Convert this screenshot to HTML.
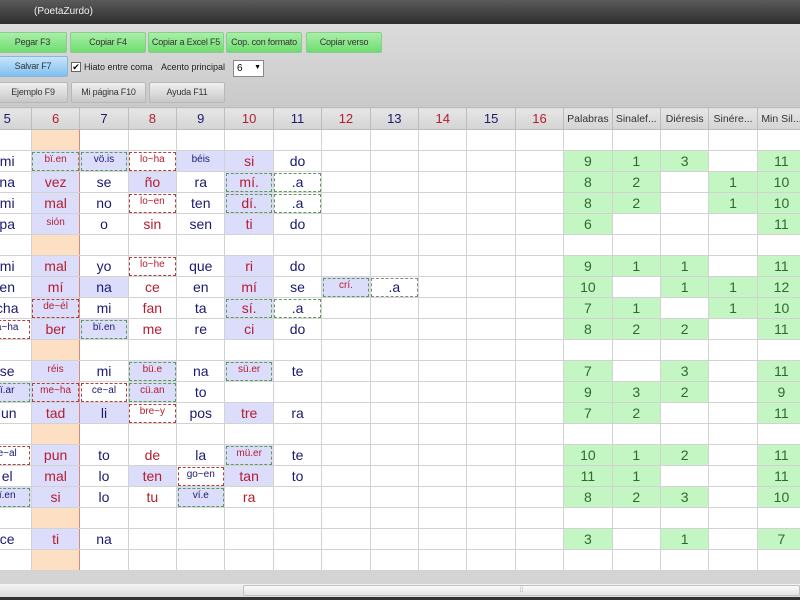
<!DOCTYPE html>
<html><head><meta charset="utf-8"><style>
*{box-sizing:border-box}
body{margin:0;width:800px;height:600px;overflow:hidden;background:#d6d6d6;font-family:"Liberation Sans",sans-serif;position:relative}
.title{position:absolute;left:0;top:0;width:800px;height:24px;background:linear-gradient(#5a5a5a,#2e2e2e);color:#eee;font-size:10px;padding:6px 0 0 34px}
.tb{position:absolute;left:0;top:24px;width:800px;height:83px;background:linear-gradient(#dcdcdc,#c9c9c9)}
.b{position:absolute;height:21px;font-size:9px;text-align:center;line-height:19px;color:#333;border-radius:2px;white-space:nowrap;overflow:hidden;letter-spacing:-0.2px}
.gr{background:linear-gradient(#a8f0a8,#6fdc6f);border:1px solid #8ccc8c}
.bl{background:linear-gradient(#c8e6fb,#7fbef0);border:1px solid #8ab4d8}
.gy{background:linear-gradient(#f0f0f0,#c8c8c8);border:1px solid #b8b8b8}
.lbl{position:absolute;font-size:9px;color:#222;white-space:nowrap}
table{position:absolute;left:-17.5px;top:107px;width:823px;border-collapse:collapse;table-layout:fixed;background:#fff}
td{width:48.4px;height:21px;padding:0;border:1px solid #d2d2d2;text-align:center;font-size:14px;color:#1a1a70;position:relative;white-space:nowrap;overflow:hidden}
tr.h td{height:22px;background:linear-gradient(#e6e6e6,#d4d4d4);border-color:#bcbcbc;font-size:13px}
tr.h td.s{font-size:10.5px;color:#333}
td.r{color:#b41e30}
td.o{background:#fde0c4}
td.c6{border-left:1px solid #d78a7a;border-right:1px solid #d78a7a}
.L{background:#dcdcfb}
.sm{font-size:10px;vertical-align:top;padding-top:3px}
.dg{outline:1px dashed #5a9a5a;outline-offset:-2px}
.dr{outline:1px dashed #b04040;outline-offset:-2px}
.dk{outline:1px dashed #888;outline-offset:-2px}
td.G{background:#c4f6c4;color:#2c6a2c}
.bot{position:absolute;left:0;top:571px;width:800px;height:14px;background:#d4d4d4}
.sb{position:absolute;left:0;top:584px;width:800px;height:13px;background:linear-gradient(#f4f4f4,#dcdcdc)}
.th{position:absolute;left:243px;top:585px;width:557px;height:11px;background:linear-gradient(#fafafa,#e4e4e4);border:1px solid #c0c0c0;border-radius:2px;font-size:7px;color:#999;text-align:center;line-height:9px}
.last{position:absolute;left:0;top:597px;width:800px;height:3px;background:#333}
</style></head><body>
<div class="title">(PoetaZurdo)</div>
<div class="tb"></div>
<div class="b gr" style="left:-2px;top:32px;width:69px">Pegar F3</div>
<div class="b gr" style="left:70px;top:32px;width:76px">Copiar F4</div>
<div class="b gr" style="left:148px;top:32px;width:76px">Copiar a Excel F5</div>
<div class="b gr" style="left:226px;top:32px;width:76px">Cop. con formato</div>
<div class="b gr" style="left:306px;top:32px;width:76px">Copiar verso</div>
<div class="b bl" style="left:-2px;top:56px;width:70px">Salvar F7</div>
<div style="position:absolute;left:71px;top:62px;width:10px;height:10px;border:1px solid #666;background:#fff;font-size:9px;line-height:8px;text-align:center">✔</div>
<div class="lbl" style="left:84px;top:62px">Hiato entre coma</div>
<div class="lbl" style="left:161px;top:62px">Acento principal</div>
<div style="position:absolute;left:233px;top:60px;width:31px;height:17px;background:#fff;border:1px solid #888;font-size:10px;padding:2px 0 0 3px">6<span style="position:absolute;right:2px;top:3px;font-size:7px">▼</span></div>
<div class="b gy" style="left:-2px;top:82px;width:70px">Ejemplo F9</div>
<div class="b gy" style="left:71px;top:82px;width:75px">Mi página F10</div>
<div class="b gy" style="left:149px;top:82px;width:76px">Ayuda F11</div>
<table>
<tr class="h"><td>5</td><td class="r c6">6</td><td>7</td><td class="r">8</td><td>9</td><td class="r">10</td><td>11</td><td class="r">12</td><td>13</td><td class="r">14</td><td>15</td><td class="r">16</td><td class="s">Palabras</td><td class="s">Sinalef...</td><td class="s">Diéresis</td><td class="s">Sinére...</td><td class="s">Min Sil...</td></tr>
<tr><td></td><td class="c6 o"></td><td></td><td></td><td></td><td></td><td></td><td></td><td></td><td></td><td></td><td></td><td></td><td></td><td></td><td></td><td></td></tr>
<tr><td>mi</td><td class="c6 r L sm dg">bï.en</td><td class="L sm dg">vö.is</td><td class="r sm dr">lo~ha</td><td class="L sm">béis</td><td class="r L">si</td><td>do</td><td></td><td></td><td></td><td></td><td></td><td class="G">9</td><td class="G">1</td><td class="G">3</td><td></td><td class="G">11</td></tr>
<tr><td>na</td><td class="c6 r L">vez</td><td>se</td><td class="r L">ño</td><td>ra</td><td class="r L dg">mí.</td><td class="dg">.a</td><td></td><td></td><td></td><td></td><td></td><td class="G">8</td><td class="G">2</td><td></td><td class="G">1</td><td class="G">10</td></tr>
<tr><td>mi</td><td class="c6 r L">mal</td><td>no</td><td class="r sm dr">lo~en</td><td>ten</td><td class="r L dg">dí.</td><td class="dg">.a</td><td></td><td></td><td></td><td></td><td></td><td class="G">8</td><td class="G">2</td><td></td><td class="G">1</td><td class="G">10</td></tr>
<tr><td>pa</td><td class="c6 r L sm">sión</td><td>o</td><td class="r">sin</td><td>sen</td><td class="r L">ti</td><td>do</td><td></td><td></td><td></td><td></td><td></td><td class="G">6</td><td></td><td></td><td></td><td class="G">11</td></tr>
<tr><td></td><td class="c6 o"></td><td></td><td></td><td></td><td></td><td></td><td></td><td></td><td></td><td></td><td></td><td></td><td></td><td></td><td></td><td></td></tr>
<tr><td>mi</td><td class="c6 r L">mal</td><td>yo</td><td class="r sm dr">lo~he</td><td>que</td><td class="r L">ri</td><td>do</td><td></td><td></td><td></td><td></td><td></td><td class="G">9</td><td class="G">1</td><td class="G">1</td><td></td><td class="G">11</td></tr>
<tr><td>en</td><td class="c6 r L">mí</td><td class="L">na</td><td class="r">ce</td><td>en</td><td class="r L">mí</td><td>se</td><td class="r L sm dg">crí.</td><td class="dk">.a</td><td></td><td></td><td></td><td class="G">10</td><td></td><td class="G">1</td><td class="G">1</td><td class="G">12</td></tr>
<tr><td>cha</td><td class="c6 r L sm dr">de~él</td><td>mi</td><td class="r">fan</td><td>ta</td><td class="r L dg">sí.</td><td class="dg">.a</td><td></td><td></td><td></td><td></td><td></td><td class="G">7</td><td class="G">1</td><td></td><td class="G">1</td><td class="G">10</td></tr>
<tr><td class="sm dr">a~ha</td><td class="c6 r L">ber</td><td class="L sm dg">bï.en</td><td class="r">me</td><td>re</td><td class="r L">ci</td><td>do</td><td></td><td></td><td></td><td></td><td></td><td class="G">8</td><td class="G">2</td><td class="G">2</td><td></td><td class="G">11</td></tr>
<tr><td></td><td class="c6 o"></td><td></td><td></td><td></td><td></td><td></td><td></td><td></td><td></td><td></td><td></td><td></td><td></td><td></td><td></td><td></td></tr>
<tr><td>se</td><td class="c6 r L sm">réis</td><td>mi</td><td class="r L sm dg">bü.e</td><td>na</td><td class="r L sm dg">sü.er</td><td>te</td><td></td><td></td><td></td><td></td><td></td><td class="G">7</td><td></td><td class="G">3</td><td></td><td class="G">11</td></tr>
<tr><td class="L sm dg">ï.ar</td><td class="c6 r L sm dr">me~ha</td><td class="sm dr">ce~al</td><td class="r L sm dg">cü.an</td><td>to</td><td></td><td></td><td></td><td></td><td></td><td></td><td></td><td class="G">9</td><td class="G">3</td><td class="G">2</td><td></td><td class="G">9</td></tr>
<tr><td>lun</td><td class="c6 r L">tad</td><td class="L">li</td><td class="r sm dr">bre~y</td><td>pos</td><td class="r L">tre</td><td>ra</td><td></td><td></td><td></td><td></td><td></td><td class="G">7</td><td class="G">2</td><td></td><td></td><td class="G">11</td></tr>
<tr><td></td><td class="c6 o"></td><td></td><td></td><td></td><td></td><td></td><td></td><td></td><td></td><td></td><td></td><td></td><td></td><td></td><td></td><td></td></tr>
<tr><td class="sm dr">e~al</td><td class="c6 r L">pun</td><td>to</td><td class="r">de</td><td>la</td><td class="r L sm dg">mü.er</td><td>te</td><td></td><td></td><td></td><td></td><td></td><td class="G">10</td><td class="G">1</td><td class="G">2</td><td></td><td class="G">11</td></tr>
<tr><td>el</td><td class="c6 r L">mal</td><td>lo</td><td class="r L">ten</td><td class="sm dr">go~en</td><td class="r L">tan</td><td>to</td><td></td><td></td><td></td><td></td><td></td><td class="G">11</td><td class="G">1</td><td></td><td></td><td class="G">11</td></tr>
<tr><td class="L sm dg">ï.en</td><td class="c6 r L">si</td><td>lo</td><td class="r">tu</td><td class="L sm dg">ví.e</td><td class="r">ra</td><td></td><td></td><td></td><td></td><td></td><td></td><td class="G">8</td><td class="G">2</td><td class="G">3</td><td></td><td class="G">10</td></tr>
<tr><td></td><td class="c6 o"></td><td></td><td></td><td></td><td></td><td></td><td></td><td></td><td></td><td></td><td></td><td></td><td></td><td></td><td></td><td></td></tr>
<tr><td>ce</td><td class="c6 r L">ti</td><td>na</td><td></td><td></td><td></td><td></td><td></td><td></td><td></td><td></td><td></td><td class="G">3</td><td></td><td class="G">1</td><td></td><td class="G">7</td></tr>
<tr><td></td><td class="c6 o"></td><td></td><td></td><td></td><td></td><td></td><td></td><td></td><td></td><td></td><td></td><td></td><td></td><td></td><td></td><td></td></tr>
</table>
<div class="bot"></div>
<div class="sb"></div>
<div class="th">⁞⁞</div>
<div class="last"></div>
</body></html>
